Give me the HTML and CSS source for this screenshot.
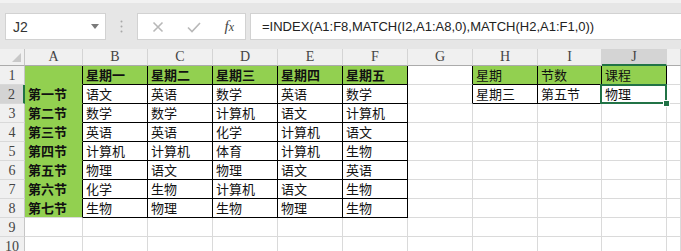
FILE: index.html
```html
<!doctype html>
<html>
<head>
    <meta charset="utf-8">
    <title>课程表 - INDEX MATCH</title>
    <link rel="stylesheet" href="styles.css">
</head>
<body>

    <div class="toolbar">
        <div class="namebox">
            <span>J2</span>
            <svg class="arrow" width="8" height="5" viewBox="0 0 8 5"><path d="M0 0H8L4 5Z" fill="#7a7a7a"/></svg>
        </div>
        <div class="dots">
            <svg width="3" height="13" viewBox="0 0 3 13"><circle cx="1.5" cy="1.5" r="1" fill="#a8a8a8"/><circle cx="1.5" cy="6.5" r="1" fill="#a8a8a8"/><circle cx="1.5" cy="11.5" r="1" fill="#a8a8a8"/></svg>
        </div>
        <div class="fxbox">
            <svg width="12" height="12" viewBox="0 0 12 12"><path d="M1.5 1.5L10.5 10.5M10.5 1.5L1.5 10.5" stroke="#b8b8b8" stroke-width="1.6" fill="none"/></svg>
            <svg width="14" height="12" viewBox="0 0 14 12"><path d="M1 6.5L5 10.5L13 2" stroke="#b8b8b8" stroke-width="1.6" fill="none"/></svg>
            <span class="fx">f<i>x</i></span>
        </div>
        <div class="formula">=INDEX(A1:F8,MATCH(I2,A1:A8,0),MATCH(H2,A1:F1,0))</div>
    </div>

    <div class="sheet">
        <!-- column headers -->
        <div class="corner"><svg width="9" height="9" viewBox="0 0 9 9"><path d="M9 0V9H0Z" fill="#c8c8c8"/></svg></div>
        <div class="hd">A</div><div class="hd">B</div><div class="hd">C</div><div class="hd">D</div>
        <div class="hd">E</div><div class="hd">F</div><div class="hd">G</div><div class="hd">H</div>
        <div class="hd">I</div><div class="hd sel">J</div><div class="hd"></div>

        <!-- row 1 -->
        <div class="rh">1</div>
        <div class="c g nb edge"></div>
        <div class="c g bd bl">星期一</div><div class="c g bd bl">星期二</div><div class="c g bd bl">星期三</div>
        <div class="c g bd bl">星期四</div><div class="c g bd bl">星期五</div>
        <div class="c edge"></div>
        <div class="c g bl">星期</div><div class="c g bl">节数</div><div class="c g bl">课程</div>
        <div class="c"></div>

        <!-- row 2 -->
        <div class="rh sel">2</div>
        <div class="c g bd nb edge">第一节</div>
        <div class="c bl">语文</div><div class="c bl">英语</div><div class="c bl">数学</div>
        <div class="c bl">英语</div><div class="c bl">数学</div>
        <div class="c edge"></div>
        <div class="c bl">星期三</div><div class="c bl">第五节</div><div class="c bl active">物理</div>
        <div class="c"></div>

        <!-- row 3 -->
        <div class="rh">3</div>
        <div class="c g bd nb edge">第二节</div>
        <div class="c bl">数学</div><div class="c bl">数学</div><div class="c bl">计算机</div>
        <div class="c bl">语文</div><div class="c bl">计算机</div>
        <div class="c"></div><div class="c"></div><div class="c"></div><div class="c"></div><div class="c"></div>

        <!-- row 4 -->
        <div class="rh">4</div>
        <div class="c g bd nb edge">第三节</div>
        <div class="c bl">英语</div><div class="c bl">英语</div><div class="c bl">化学</div>
        <div class="c bl">计算机</div><div class="c bl">语文</div>
        <div class="c"></div><div class="c"></div><div class="c"></div><div class="c"></div><div class="c"></div>

        <!-- row 5 -->
        <div class="rh">5</div>
        <div class="c g bd nb edge">第四节</div>
        <div class="c bl">计算机</div><div class="c bl">计算机</div><div class="c bl">体育</div>
        <div class="c bl">计算机</div><div class="c bl">生物</div>
        <div class="c"></div><div class="c"></div><div class="c"></div><div class="c"></div><div class="c"></div>

        <!-- row 6 -->
        <div class="rh">6</div>
        <div class="c g bd nb edge">第五节</div>
        <div class="c bl">物理</div><div class="c bl">语文</div><div class="c bl">物理</div>
        <div class="c bl">语文</div><div class="c bl">英语</div>
        <div class="c"></div><div class="c"></div><div class="c"></div><div class="c"></div><div class="c"></div>

        <!-- row 7 -->
        <div class="rh">7</div>
        <div class="c g bd nb edge">第六节</div>
        <div class="c bl">化学</div><div class="c bl">生物</div><div class="c bl">计算机</div>
        <div class="c bl">语文</div><div class="c bl">生物</div>
        <div class="c"></div><div class="c"></div><div class="c"></div><div class="c"></div><div class="c"></div>

        <!-- row 8 -->
        <div class="rh">8</div>
        <div class="c g bd edge">第七节</div>
        <div class="c bl">生物</div><div class="c bl">物理</div><div class="c bl">生物</div>
        <div class="c bl">物理</div><div class="c bl">生物</div>
        <div class="c"></div><div class="c"></div><div class="c"></div><div class="c"></div><div class="c"></div>

        <!-- row 9 -->
        <div class="rh">9</div>
        <div class="c"></div><div class="c"></div><div class="c"></div><div class="c"></div><div class="c"></div><div class="c"></div>
        <div class="c"></div><div class="c"></div><div class="c"></div><div class="c"></div><div class="c"></div>

        <!-- row 10 -->
        <div class="rh">10</div>
        <div class="c"></div><div class="c"></div><div class="c"></div><div class="c"></div><div class="c"></div><div class="c"></div>
        <div class="c"></div><div class="c"></div><div class="c"></div><div class="c"></div><div class="c"></div>
    </div>

</body>
</html>
```

FILE: styles.css
```css
body {
    margin: 0;
    width: 681px;
    height: 251px;
    overflow: hidden;
    background-color: #fff;
    font-family: "Noto Sans CJK SC", sans-serif;
}

/* formula bar */
.toolbar {
    display: flex;
    align-items: flex-start;
    height: 49px;
    box-sizing: border-box;
    padding: 10px 0 0 5px;
    background-color: #e6e6e6;
    border-top: 3px solid #f2f2f2;
}
.namebox {
    display: flex;
    align-items: center;
    justify-content: space-between;
    width: 101px;
    height: 27px;
    box-sizing: border-box;
    padding: 0 6px 0 7px;
    background-color: #fff;
    border: 1px solid #d2d2d2;
    font-family: "Liberation Sans", sans-serif;
    font-size: 14px;
    color: #333;
}
.dots {
    display: flex;
    justify-content: center;
    align-items: center;
    width: 31px;
    height: 27px;
}
.fxbox {
    display: flex;
    align-items: center;
    justify-content: space-between;
    width: 109px;
    height: 27px;
    box-sizing: border-box;
    padding: 0 11px 0 14px;
    background-color: #fff;
    border: 1px solid #d2d2d2;
}
.fx {
    font-family: "Liberation Serif", serif;
    font-style: italic;
    font-size: 15px;
    color: #444;
}
.fx i {
    font-size: 12px;
}
.formula {
    flex: 1;
    height: 27px;
    box-sizing: border-box;
    margin-left: 4px;
    padding-left: 11px;
    line-height: 25px;
    background-color: #fff;
    border: 1px solid #d2d2d2;
    border-right: none;
    font-family: "Liberation Sans", sans-serif;
    font-size: 13px;
    color: #222;
    white-space: nowrap;
}

/* sheet grid */
.sheet {
    display: grid;
    grid-template-columns: 25px 58px 65px 65px 65px 65px 65px 65px 65px 64px 65px 1fr;
    grid-template-rows: 17px;
    grid-auto-rows: 19px;
}
.sheet > div {
    box-sizing: border-box;
}
.corner {
    display: flex;
    align-items: flex-end;
    justify-content: flex-end;
    padding: 0 3px 3px 0;
    background-color: #f0f0f0;
    border-right: 1px solid #c6c6c6;
    border-bottom: 1px solid #ababab;
}
.hd {
    text-align: center;
    line-height: 16px;
    background-color: #f0f0f0;
    border-right: 1px solid #d4d4d4;
    border-bottom: 1px solid #ababab;
    font-family: "Liberation Serif", serif;
    font-size: 14px;
    color: #444;
}
.hd.sel {
    background-color: #d4d4d4;
    border-bottom: 2px solid #217346;
}
.rh {
    text-align: center;
    line-height: 20px;
    background-color: #f0f0f0;
    border-right: 1px solid #c6c6c6;
    border-bottom: 1px solid #d9d9d9;
    font-family: "Liberation Serif", serif;
    font-size: 14px;
    color: #444;
}
.rh.sel {
    background-color: #d4d4d4;
    border-right: 2px solid #217346;
}
.c {
    padding-left: 3px;
    line-height: 18px;
    border-right: 1px solid #dadada;
    border-bottom: 1px solid #dadada;
    font-size: 13px;
    color: #111;
    white-space: nowrap;
}
.g {
    background-color: #92d050;
}
.bd {
    font-weight: bold;
}
.bl {
    border-right-color: #000;
    border-bottom-color: #000;
}
.edge {
    border-right-color: #000;
}
.nb {
    border-bottom-color: #92d050;
}

/* active cell J2 */
.active {
    position: relative;
}
.active::after {
    content: "";
    position: absolute;
    left: -2px;
    top: -1px;
    right: -1px;
    bottom: -1px;
    border: 2px solid #217346;
    z-index: 2;
}
.active::before {
    content: "";
    position: absolute;
    right: -4px;
    bottom: -4px;
    width: 5px;
    height: 5px;
    background-color: #217346;
    border: 1px solid #fff;
    z-index: 3;
}
```
